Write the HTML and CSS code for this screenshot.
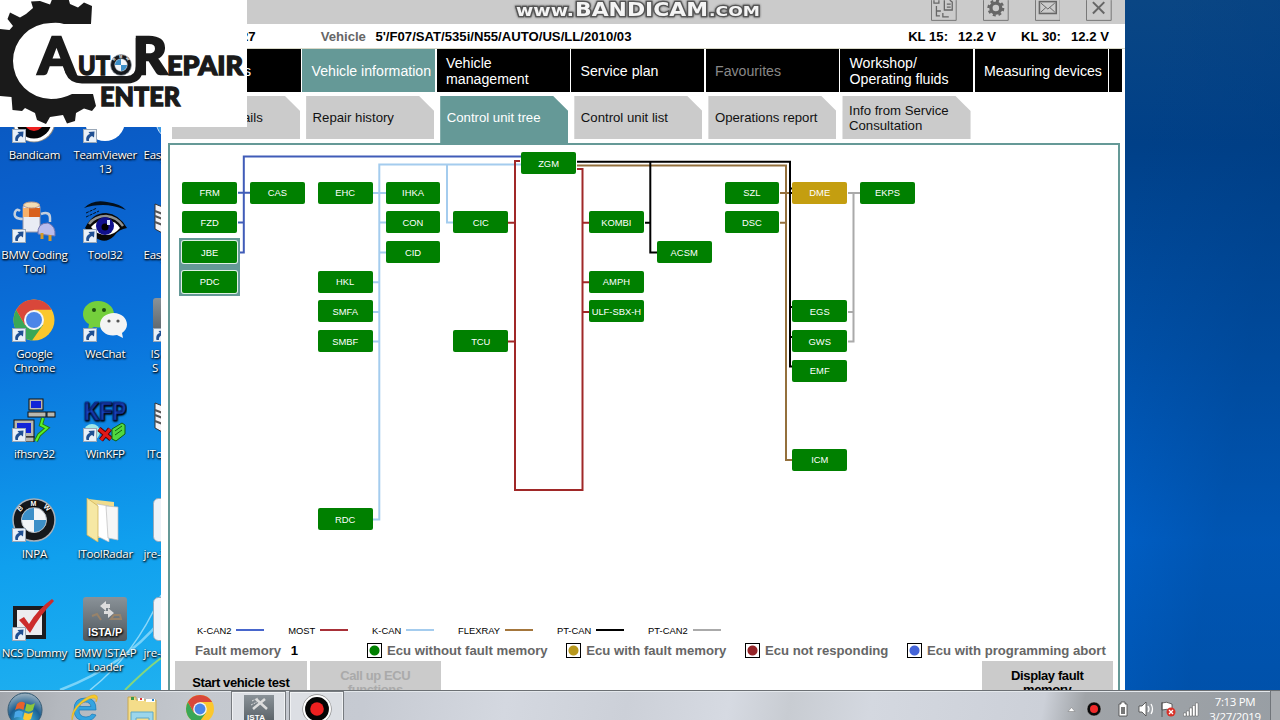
FILE: index.html
```
<!DOCTYPE html>
<html lang="en">
<head>
    <meta charset="UTF-8" />
    <title>Control unit tree</title>
    <link rel="stylesheet" href="styles.css">
</head>
<body>
    <svg class="defs" width="0" height="0">
        <defs>
            <linearGradient id="grayfade" x1="0" y1="0" x2="0" y2="1">
                <stop offset="0" stop-color="#8a9298" />
                <stop offset="1" stop-color="#50585e" />
            </linearGradient>
            <radialGradient id="orbfade" cx=".5" cy=".85" r=".8">
                <stop offset="0" stop-color="#48c8f0" />
                <stop offset=".6" stop-color="#1b5f92" />
                <stop offset="1" stop-color="#8fa9bb" />
            </radialGradient>
            <g id="shortcut" transform="translate(0 30)">
                <rect x=".5" y=".5" width="13" height="13" fill="#e8f0f8" stroke="#9aa8b8" />
                <path d="M3.500 12C2.500 8 4.500 5.500 7 5L5.500 3L11.500 2.500L11 8.500L9 7C7 8 5.500 9.500 6 12Z" fill="#1f4f92" />
            </g>
            <symbol id="chrome" viewBox="0 0 44 44">
                <circle cx="22" cy="22" r="20.500" fill="#fbc72d" />
                <path d="M22 22L31 27L20 42.400A20.500 20.500 0 0 1 4.200 11.800L13 27Z" fill="#3aa757" />
                <path d="M4.200 11.800A20.500 20.500 0 0 1 39.800 11.800H22L13 27Z" fill="#d9473a" />
                <circle cx="22" cy="22" r="10" fill="#f4f4f4" />
                <circle cx="22" cy="22" r="8" fill="#4a86e8" />
            </symbol>
            <symbol id="roundel" viewBox="0 0 44 44">
                <circle cx="22" cy="22" r="21" fill="#15181c" stroke="#a8b0b8" stroke-width="1.500" />
                <circle cx="22" cy="22" r="12.500" fill="#f2f5f8" stroke="#b8c0c8" />
                <path d="M22 22V10A12 12 0 0 0 10 22ZM22 22V34A12 12 0 0 0 34 22Z" fill="#3c8fc8" />
                <g class="roundel-text">
                    <text x="8" y="14" transform="rotate(-45 8 14)">B</text>
                    <text x="18.500" y="8">M</text>
                    <text x="31" y="9" transform="rotate(45 31 9)">W</text>
                </g>
            </symbol>
            <symbol id="record" viewBox="0 0 44 44">
                <circle cx="22" cy="22" r="21.500" fill="#888" />
                <circle cx="22" cy="22" r="20.500" fill="#fff" />
                <circle cx="22" cy="22" r="17.500" fill="#050505" />
                <circle cx="22" cy="22" r="10" fill="#ee2020" />
            </symbol>
            <symbol id="book" viewBox="0 0 44 44">
                <path d="M2 5L20 12V40L2 30Z" fill="#f2f2f6" stroke="#333" />
                <path d="M2 12L20 19M2 17L20 24M2 23L20 30" stroke="#555" stroke-width="2" />
            </symbol>
            <symbol id="page" viewBox="0 0 44 44">
                <rect x=".5" y=".5" width="43" height="43" rx="5" fill="#eef2f8" stroke="#9ab" />
            </symbol>
        </defs>
    </svg>

    <svg class="streaks" viewBox="0 0 161 100" width="161" height="100">
        <path d="M60 100Q125 75 161 30" stroke="#b8ecff" stroke-width="2.500" opacity=".6" />
        <path d="M90 100Q135 65 161 5" stroke="#d8f6ff" stroke-width="1.500" opacity=".6" />
        <path d="M125 100Q145 80 161 68" stroke="#9fe060" stroke-width="2" opacity=".8" />
    </svg>

    <div class="desktop">
        <div class="shortcut">
            <svg viewBox="0 0 44 44"><use href="#record" /><use href="#shortcut" /></svg>
            <span>Bandicam</span>
        </div>
        <div class="shortcut">
            <svg viewBox="0 0 44 44"><circle cx="22" cy="22" r="20" fill="#fff" /><use href="#shortcut" /></svg>
            <span>TeamViewer 13</span>
        </div>
        <div class="shortcut cut">
            <svg viewBox="0 0 44 44"><circle cx="22" cy="22" r="19" fill="#3c9be8" stroke="#cfe4fa" /></svg>
            <span>Easy</span>
        </div>

        <div class="shortcut">
            <svg viewBox="0 0 44 44">
                <path d="M11 20Q1 20 3 13Q5 9 8 12M29 15Q38 12 38 19V23" fill="none" stroke="#c6d0dc" stroke-width="2.500" />
                <rect x="11" y="5" width="17" height="28" rx="3" fill="#e9ecf4" stroke="#99a" />
                <path d="M11 9H28V18H11Z" fill="#d8611e" />
                <path d="M11 9H17V18H11Z" fill="#f6b06a" />
                <ellipse cx="19.500" cy="6" rx="8" ry="3" fill="#f2dcb4" stroke="#b98" />
                <path d="M26 35Q25 24 36 24Q44 27 43 37Z" fill="#b9bcec" stroke="#7478b0" />
                <path d="M30 34V40M38 36V42" stroke="#d59a28" stroke-width="3" />
                <use href="#shortcut" />
            </svg>
            <span>BMW Coding Tool</span>
        </div>
        <div class="shortcut">
            <svg viewBox="0 0 44 44">
                <path d="M1 9Q10 0 24 3Q38 5 43 11Q30 6 20 6Q9 6 1 9Z" fill="#04101c" />
                <path d="M3 14L14 9M3 18L16 12" stroke="#04101c" stroke-dasharray="3 1" />
                <path d="M2 29Q9 14 23 14Q36 15 44 29Q36 30 31 37Q22 46 12 38Q8 34 2 29Z" fill="#080808" />
                <path d="M6 25Q12 17 23 17Q34 18 40 27" fill="none" stroke="#8d9090" stroke-width="2.500" />
                <path d="M8 28Q14 21 23 21Q33 22 37 29Q31 36 24 36Q13 36 8 28Z" fill="#fff" />
                <circle cx="22" cy="27" r="9" fill="#10108c" />
                <circle cx="22" cy="28" r="3.500" fill="#000" />
                <path d="M24 21H27V26H24Z" fill="#d8e4ff" />
                <use href="#shortcut" />
            </svg>
            <span>Tool32</span>
        </div>
        <div class="shortcut cut">
            <svg viewBox="0 0 44 44"><use href="#book" /></svg>
            <span>Easy</span>
        </div>

        <div class="shortcut">
            <svg viewBox="0 0 44 44"><use href="#chrome" /><use href="#shortcut" /></svg>
            <span>Google Chrome</span>
        </div>
        <div class="shortcut">
            <svg viewBox="0 0 44 44">
                <path d="M15 3C6 3 0 9 0 16C0 20 2 24 6 26L5 32L11 29C22 31 31 25 31 16C31 9 24 3 15 3Z" fill="#74cf3c" />
                <circle cx="11" cy="12" r="2" fill="#1d4d12" /><circle cx="21" cy="12" r="2" fill="#1d4d12" />
                <path d="M31 15C23 15 17 20 17 26.500C17 34 25 39 34 37L40 40L39 35C42 33 44 30 44 26.500C44 20 38 15 31 15Z" fill="#f4f4f4" />
                <circle cx="26" cy="23" r="1.600" fill="#555" /><circle cx="35" cy="23" r="1.600" fill="#555" />
                <use href="#shortcut" />
            </svg>
            <span>WeChat</span>
        </div>
        <div class="shortcut cut">
            <svg viewBox="0 0 44 44"><rect width="44" height="44" rx="3" fill="url(#grayfade)" /><use href="#shortcut" /></svg>
            <span class="center">IS<br>S</span>
        </div>

        <div class="shortcut">
            <svg viewBox="0 0 44 44">
                <g stroke="#111" fill="#b8b8b0">
                    <rect x="17" y="1" width="14" height="11" /><rect x="16" y="14" width="18" height="5" />
                    <rect x="35" y="14" width="8" height="5" />
                    <rect x="2" y="22" width="20" height="17" /><rect x="8" y="39" width="14" height="5" />
                </g>
                <rect x="19" y="3" width="10" height="7" fill="#1024d8" />
                <rect x="5" y="25" width="14" height="10" fill="#1024d8" />
                <path d="M31 20L29 27L35 30L27 37L24 43" fill="none" stroke="#2a7a10" stroke-width="4" />
                <path d="M31 20L29 27L35 30L27 37L24 43" fill="none" stroke="#58f428" stroke-width="2" />
                <use href="#shortcut" />
            </svg>
            <span>ifhsrv32</span>
        </div>
        <div class="shortcut">
            <svg viewBox="0 0 44 44">
                <circle cx="9" cy="34" r="8" fill="#9ee8e8" />
                <path d="M16 31L28 41M27 31L18 42" stroke="#500" stroke-width="5" />
                <path d="M16 31L28 41M27 31L18 42" stroke="#e01818" stroke-width="3" />
                <path d="M29 31L39 25L42 27V36L33 43L29 41Z" fill="#50d840" stroke="#126010" />
                <path d="M32 33L39 28M32 37L39 32" stroke="#126010" />
                <text class="kfp" x="1" y="22" textLength="42" lengthAdjust="spacingAndGlyphs">KFP</text>
                <use href="#shortcut" />
            </svg>
            <span>WinKFP</span>
        </div>
        <div class="shortcut cut">
            <svg viewBox="0 0 44 44"><use href="#book" /></svg>
            <span class="inset">ITool</span>
        </div>

        <div class="shortcut">
            <svg viewBox="0 0 44 44"><use href="#roundel" /><use href="#shortcut" /></svg>
            <span>INPA</span>
        </div>
        <div class="shortcut">
            <svg viewBox="0 0 44 44">
                <path d="M5 1L31 4V40H12Z" fill="#f0dc8c" />
                <path d="M14 6L26 8V44L14 38Z" fill="#fff" stroke="#bbb" stroke-width=".7" />
                <path d="M23 8L35 9V42L25 40Z" fill="#f6f6f6" stroke="#bbb" stroke-width=".7" />
                <path d="M4 0L15 8V44L4 37Z" fill="#f6e8a4" stroke="#d0b45c" stroke-width=".8" />
            </svg>
            <span>IToolRadar</span>
        </div>
        <div class="shortcut cut">
            <svg viewBox="0 0 44 44"><use href="#page" /></svg>
            <span>jre-7</span>
        </div>

        <div class="shortcut">
            <svg viewBox="0 0 44 44">
                <rect x="1" y="9" width="33" height="33" fill="#1c1c20" />
                <rect x="5" y="13" width="25" height="25" fill="#ececf0" />
                <path d="M7 23L12 20L17 27Q26 12 40 2L42 4Q28 18 18 36Q12 28 7 23Z" fill="#cc2c2c" />
                <use href="#shortcut" />
            </svg>
            <span>NCS Dummy</span>
        </div>
        <div class="shortcut">
            <svg viewBox="0 0 44 44">
                <rect width="44" height="44" rx="3" fill="url(#grayfade)" />
                <path d="M17 9L23 4V7H27V11H23V14ZM31 16L25 11V14H21V17H25V21Z" fill="#ddd" />
                <path d="M9 19L14 17L18 23M28 22L31 18H37L38 22Z" fill="none" stroke="#98836a" stroke-width="2" />
                <text class="istap" x="5" y="39" textLength="34">ISTA/P</text>
            </svg>
            <span>BMW ISTA-P Loader</span>
        </div>
        <div class="shortcut cut">
            <svg viewBox="0 0 44 44"><use href="#page" /></svg>
            <span>jre-8</span>
        </div>
    </div>

    <div class="app">
        <div class="titlebar">
            <svg class="tool" viewBox="0 0 26 22">
                <path class="frame" d="M.5 0V20.500H25.500V0" />
                <g fill="none" stroke="#666" stroke-width="1.300">
                    <path d="M13.500 0V10H21.500V2L19 0M16 4H20M16 7H20M3 0V3H8V0M5.500 6V16H9M6 11H10M12 13V17H18" />
                </g>
            </svg>
            <svg class="tool" viewBox="0 0 26 22">
                <path class="frame" d="M.5 0V20.500H25.500V0" />
                <circle cx="13" cy="8" r="5" fill="none" stroke="#666" stroke-width="3.400" />
                <circle cx="13" cy="8" r="7.400" fill="none" stroke="#666" stroke-width="2.400" stroke-dasharray="3 2.810" />
            </svg>
            <svg class="tool" viewBox="0 0 26 22">
                <path class="frame" d="M.5 0V20.500H25.500V0" />
                <g fill="none" stroke="#666">
                    <rect x="4.500" y="1.500" width="17" height="12" stroke-width="1.600" />
                    <path d="M6 3L13 9L20 3M6 12L11 7.500M20 12L15 7.500" />
                </g>
            </svg>
            <svg class="tool" viewBox="0 0 26 22">
                <path class="frame" d="M.5 0V20.500H25.500V0" />
                <path d="M7 2L18.500 13.500M18.500 2L7 13.500" stroke="#666" stroke-width="2" />
            </svg>
        </div>

        <div class="info">
            <span class="vin">27</span>
            <span class="key">Vehicle</span>
            <span class="car">5'/F07/SAT/535i/N55/AUTO/US/LL/2010/03</span>
            <span class="volt">KL 15:</span><span>12.2 V</span>
            <span class="volt second">KL 30:</span><span>12.2 V</span>
        </div>

        <nav class="main">
            <a class="first">Operations</a>
            <a class="active">Vehicle information</a>
            <a>Vehicle<br>management</a>
            <a>Service plan</a>
            <a class="disabled">Favourites</a>
            <a>Workshop/<br>Operating fluids</a>
            <a>Measuring devices</a>
            <a class="rest"></a>
        </nav>

        <nav class="sub">
            <a>Vehicle details</a>
            <a>Repair history</a>
            <a class="active">Control unit tree</a>
            <a>Control unit list</a>
            <a>Operations report</a>
            <a>Info from Service Consultation</a>
        </nav>

        <div class="panel">
            <div class="tree">
                <svg class="wires" viewBox="170 145 948 460">
                    <path class="kcan2" d="M521 156.500H243.800V252.500H240M238 192.800H250M238 222.600H243.800" />
                    <path class="kcan" d="M521 164.500H379.300V519.500H373M447 164.500V222.600H453M373 193H386M379 222.600H386M379 252.500H386M373 282.200H379M373 312H379M373 341.500H379" />
                    <path class="most" d="M520 161H515V490H582.500V169H577M508 222.700H515M508 341.500H515M582.500 222.700H589M582.500 282.200H589M582.500 312H589" />
                    <path class="flexray" d="M577 165.500H786V460H792M780 193H792M780 222.700H786" />
                    <path class="ptcan" d="M577 161.700H790V366.500H793M790 188.500H793M789 193H793M790 307H793M790 337H793M650.300 161.700V252.500H657M645 222.700H650" />
                    <path class="ptcan2" d="M848 193H860M853.500 193V341.500H848M848 312H853.500" />
                </svg>
                <div class="group"></div>
                <div class="ecu c6 r1">ZGM</div>
                <div class="ecu c1 r2">FRM</div>
                <div class="ecu c2 r2">CAS</div>
                <div class="ecu c3 r2">EHC</div>
                <div class="ecu c4 r2">IHKA</div>
                <div class="ecu c9 r2">SZL</div>
                <div class="ecu c10 r2 fault">DME</div>
                <div class="ecu c11 r2">EKPS</div>
                <div class="ecu c1 r3">FZD</div>
                <div class="ecu c4 r3">CON</div>
                <div class="ecu c5 r3">CIC</div>
                <div class="ecu c7 r3">KOMBI</div>
                <div class="ecu c9 r3">DSC</div>
                <div class="ecu c1 r4 grouped">JBE</div>
                <div class="ecu c4 r4">CID</div>
                <div class="ecu c8 r4">ACSM</div>
                <div class="ecu c1 r5 grouped">PDC</div>
                <div class="ecu c3 r5">HKL</div>
                <div class="ecu c7 r5">AMPH</div>
                <div class="ecu c3 r6">SMFA</div>
                <div class="ecu c7 r6">ULF-SBX-H</div>
                <div class="ecu c10 r6">EGS</div>
                <div class="ecu c3 r7">SMBF</div>
                <div class="ecu c5 r7">TCU</div>
                <div class="ecu c10 r7">GWS</div>
                <div class="ecu c10 r8">EMF</div>
                <div class="ecu c10 r11">ICM</div>
                <div class="ecu c3 r13">RDC</div>
            </div>

            <div class="buses">
                <span>K-CAN2<i class="line blue"></i></span>
                <span>MOST<i class="line red"></i></span>
                <span>K-CAN<i class="line light"></i></span>
                <span>FLEXRAY<i class="line brown"></i></span>
                <span>PT-CAN<i class="line black"></i></span>
                <span>PT-CAN2<i class="line gray"></i></span>
            </div>

            <div class="status">
                <div class="count">Fault memory <b>1</b></div>
                <span><i class="dot green"></i>Ecu without fault memory</span>
                <span><i class="dot gold"></i>Ecu with fault memory</span>
                <span><i class="dot red"></i>Ecu not responding</span>
                <span><i class="dot blue"></i>Ecu with programming abort</span>
            </div>

            <div class="actions">
                <button>Start vehicle test</button>
                <button disabled>Call up ECU functions</button>
                <button class="last">Display fault memory</button>
            </div>
        </div>
    </div>

    <svg class="watermark" viewBox="0 0 256 24" width="256" height="24">
        <text x="6" y="16" textLength="58" lengthAdjust="spacingAndGlyphs">www.</text>
        <text class="big" x="65" y="16" textLength="133" lengthAdjust="spacingAndGlyphs">BANDICAM</text>
        <text class="com" x="199" y="16" textLength="51" lengthAdjust="spacingAndGlyphs">.COM</text>
    </svg>

    <svg class="logo" viewBox="0 0 247 127" width="247" height="127">
        <path fill="#1a1a1a" d="M91 24L92 6L84 2.500L78 7.500L70 4L68 -3H53L50 4.500L40 1L31 1.500L33 8L26 14L20 17.500L10 12.500L7.500 19L13 26L9.500 30L0 29V96L11.500 97L12.500 110L22 111L25 108L35 113L37 120L46 124L50 117L63 115L67 123.500L75 121L76 113L84 108.500L92 111L96 106L93 94H72Q62 99 51 99A38 38 0 0 1 51 23Q58 22 64 24Z" />
        <path fill="none" stroke="#1a1a1a" stroke-width="7.500" d="M64 58L69 72Q72 79.700 82 79.700H127Q139.500 79.700 139.500 66V38" />
        <g class="logo-text">
            <text class="cap" x="38" y="74" textLength="37" lengthAdjust="spacingAndGlyphs">A</text>
            <text class="cap" x="133" y="74" textLength="34" lengthAdjust="spacingAndGlyphs">R</text>
            <text x="78" y="74.500" textLength="32" lengthAdjust="spacingAndGlyphs">UT</text>
            <text x="167" y="74.500" textLength="76" lengthAdjust="spacingAndGlyphs">EPAIR</text>
            <text x="100" y="106" textLength="80" lengthAdjust="spacingAndGlyphs">ENTER</text>
        </g>
        <use href="#roundel" x="110" y="54" width="22" height="22" />
    </svg>

    <div class="taskbar">
        <svg class="orb" viewBox="0 0 36 36">
            <circle cx="18" cy="18" r="17" fill="url(#orbfade)" stroke="#345a74" />
            <path d="M10 12Q14 8 18 11L16.500 18Q12 15 8 18Z" fill="#e8622c" />
            <path d="M19.500 11.500Q24 14 28 11L26 18Q22 21 18 18.500Z" fill="#8cc63c" />
            <path d="M8 20Q12 17 16 20L14.500 26Q11 24 7 26Z" fill="#4aa8e8" />
            <path d="M17.500 20.500Q22 23 26 20L24 27Q20 30 16 27Z" fill="#fcc830" />
        </svg>
        <svg class="ie" viewBox="0 0 30 32">
            <path d="M26 18H9Q9 25 16 25Q20 25 22 22L26 23Q23 29 15.500 29Q4 29 4 17.500Q4 6 15.500 6Q26.500 6 26 18ZM9.500 14.500H21Q20 10 15.500 10Q11 10 9.500 14.500Z" fill="#35a4e0" stroke="#1878b8" stroke-width=".7" />
            <path d="M2 29Q0 19 11 9.500Q23 0 27 4Q28.500 6 26 10Q27 4 19 7Q5 14 3 25Z" fill="#f6c92c" stroke="#d0a018" stroke-width=".4" />
        </svg>
        <svg class="folder" viewBox="0 0 30 32">
            <path d="M1 4H9V7H29V32H1Z" fill="#f4dd8a" stroke="#c8a850" />
            <path d="M4 4H7V7H4Z" fill="#3a9a4a" /><path d="M11 5H17V8H11ZM19 6H28V9H19Z" fill="#fff" />
            <path d="M13 5H15V7H13Z" fill="#d33" /><path d="M25 6H27V8H25Z" fill="#38c" />
            <path d="M4 32V19H26V32H22V25H9V32Z" fill="#9bd6ec" stroke="#5fa8c8" />
        </svg>
        <svg class="chrome" viewBox="0 0 44 44"><use href="#chrome" /></svg>
        <div class="task">
            <svg viewBox="0 0 30 32">
                <rect width="30" height="32" fill="url(#grayfade)" />
                <path d="M9 14L21 4M12 4L23 14" stroke="#ddd" stroke-width="2.500" />
                <path d="M8 6L14 3M7 10L13 7" stroke="#ddd" stroke-dasharray="2 1" />
                <text class="ista" x="3" y="25" textLength="18">ISTA</text>
            </svg>
        </div>
        <div class="task">
            <svg class="rec" viewBox="0 0 44 44"><use href="#record" /></svg>
        </div>

        <div class="tray">
            <svg viewBox="0 0 136 30" width="136" height="30">
                <path d="M4 21.500H11L7.500 17.500Z" fill="#fff" stroke="#777" stroke-width=".5" />
                <circle cx="30" cy="19" r="7" fill="#0a0a0a" stroke="#bbb" stroke-width=".5" />
                <circle cx="30" cy="19" r="4" fill="#f02a2a" />
                <g fill="#fff" stroke="#444" stroke-width=".8">
                    <path d="M57 12H61V14H63V26H55V14H57Z" />
                    <path d="M57 17H61V24H57Z" fill="#777" stroke="none" />
                    <path d="M75 16H78L82 12V26L78 22H75Z" />
                    <path d="M98 12V27M98 13Q102 11 108 14V21Q103 18 98 20Z" />
                    <path d="M119.500 23H122V26H119.500ZM122.500 21H125V26H122.500ZM125.500 18H128V26H125.500ZM128.500 15.500H131V26H128.500ZM131.500 13H134V26H131.500Z" stroke-width=".4" />
                </g>
                <path d="M84 16Q86 19 84 22M87 14Q90 19 87 24" fill="none" stroke="#fff" stroke-width="1.300" />
                <circle cx="107" cy="22" r="4.500" fill="#d83028" />
                <path d="M105 20L109 24M109 20L105 24" stroke="#fff" stroke-width="1.300" />
            </svg>
            <div class="clock">7:13 PM<br>3/27/2019</div>
            <div class="peek"></div>
        </div>
    </div>
</body>
</html>
```
FILE: styles.css
```
* {
    box-sizing: border-box;
}

body {
    margin: 0;
    width: 1280px;
    height: 720px;
    overflow: hidden;
    position: relative;
    font-family: "Liberation Sans", Arial, sans-serif;
    background:
        linear-gradient(100deg, #0060cc00 1150px, #003c8055 1290px),
        linear-gradient(#0a4684, #004088 20%, #0050a8 48%, #0062cc 75%, #005cc0 96%) 700px 0 / 580px 100% no-repeat,
        linear-gradient(170deg, #0a50b4, #0a60cc 22%, #0a74dc 38%, #10a0ee 60%, #22b4f0 80%, #189ee4);
}

.defs {
    position: absolute;
}

.streaks {
    position: absolute;
    left: 0;
    top: 590px;
    fill: none;
}

/* desktop icons */
.desktop {
    position: absolute;
    left: -1px;
    top: 99px;
    width: 162px;
    height: 591px;
    overflow: hidden;
    display: grid;
    grid-template-columns: repeat(3, 70.8px);
    grid-auto-rows: 99.7px;
}

.shortcut {
    display: flex;
    flex-direction: column;
    align-items: center;
    gap: 5px;
    font-family: "Open Sans", "Noto Sans", sans-serif;
    font-size: 11.5px;
    line-height: 14px;
    letter-spacing: -0.25px;
    text-align: center;
    color: #fff;
    text-shadow: 0 1px 2px #000, 1px 1px 2px #000;
}

    .shortcut svg {
        width: 44px;
        height: 44px;
    }

    .shortcut.cut {
        align-items: flex-start;
        text-align: left;
        padding-left: 3px;
    }

        .shortcut.cut svg {
            margin-left: 9px;
        }

        .shortcut.cut .inset {
            margin-left: 3px;
        }

        .shortcut.cut .center {
            margin-left: 7px;
            text-align: center;
        }

.roundel-text {
    font: bold 7px "Liberation Sans", sans-serif;
    fill: #fff;
}

.kfp {
    font: bold 25px "Liberation Sans", sans-serif;
    fill: #1c50e8;
    stroke: #0a2080;
    stroke-width: 0.6px;
}

.istap {
    font: bold 11px "Liberation Sans", sans-serif;
    fill: #fff;
}

.ista {
    font: bold 8px "Liberation Sans", sans-serif;
    fill: #fff;
}

/* diagnosis window */
.app {
    position: absolute;
    left: 161px;
    top: 0;
    width: 964px;
    height: 690px;
    overflow: hidden;
    background: #fff;
}

.titlebar {
    height: 24px;
    padding-right: 13px;
    display: flex;
    justify-content: flex-end;
    gap: 26px;
    background: #cbcbcb;
}

.tool {
    width: 25.7px;
    height: 22px;
}

    .tool .frame {
        fill: none;
        stroke: #777;
    }

.info {
    height: 25px;
    display: flex;
    align-items: center;
    border-bottom: 1px solid #d8d8c8;
    font-size: 13.15px;
    font-weight: bold;
    padding: 0 16px 0 80px;
}

    .info .key {
        margin-left: 65px;
        color: #666;
    }

    .info .car {
        margin-left: 9.5px;
    }

    .info .volt {
        margin-left: auto;
        margin-right: 10px;
    }

    .info .second {
        margin-left: 25px;
    }

.main {
    display: flex;
    gap: 1.7px;
    height: 43px;
    padding-left: 6.8px;
}

    .main a {
        flex: none;
        width: 132.8px;
        padding-left: 9.3px;
        display: flex;
        align-items: center;
        background: #000;
        color: #fff;
        font-size: 14.15px;
        line-height: 16px;
        white-space: nowrap;
    }

    .main .first {
        padding-left: 14px;
    }

    .main .active {
        background: #659997;
    }

    .main .disabled {
        color: #888;
    }

    .main .rest {
        width: 13px;
    }

.sub {
    display: flex;
    align-items: flex-start;
    gap: 6px;
    height: 51px;
    padding: 4px 0 0 11px;
}

    .sub a {
        width: 128.1px;
        height: 43px;
        padding: 0 6px 0 6.5px;
        display: flex;
        align-items: center;
        background: #cbcbcb;
        clip-path: polygon(0 0, 113px 0, 100% 15px, 100% 100%, 0 100%);
        color: #111;
        font-size: 13.2px;
        line-height: 15px;
    }

    .sub .active {
        height: 47px;
        padding-bottom: 4px;
        background: #659997;
        color: #fff;
    }

.panel {
    margin: 0 5px 0 7px;
    height: 560px;
    border: 2px solid #659997;
}

/* control unit tree */
.tree {
    position: relative;
    height: 478px;
    padding: 7px 0 0 12.2px;
    display: grid;
    grid-template-columns: repeat(11, 54.8px);
    grid-template-rows: repeat(13, 22px);
    column-gap: 13px;
    row-gap: 7.7px;
}

.wires {
    position: absolute;
    left: 0;
    top: 0;
    width: 948px;
    height: 460px;
    fill: none;
    stroke-width: 2;
}

.kcan2 { stroke: #405cb8; }
.kcan { stroke: #a4ccee; }
.most { stroke: #a02828; }
.flexray { stroke: #94703c; }
.ptcan { stroke: #000; }
.ptcan2 { stroke: #aaa; }

.ecu {
    position: relative;
    display: flex;
    align-items: center;
    justify-content: center;
    border-radius: 2px;
    background: #008000;
    color: #fff;
    font-size: 9.4px;
    white-space: nowrap;
}

    .ecu.fault {
        background: #c49e10;
    }

    .ecu.grouped {
        box-shadow: 0 0 0 1px #dff0e4;
    }

.group {
    position: relative;
    grid-column: 1;
    grid-row: 4 / 6;
    margin: -3.5px;
    background: #659997;
}

.c1 { grid-column: 1; }
.c2 { grid-column: 2; }
.c3 { grid-column: 3; }
.c4 { grid-column: 4; }
.c5 { grid-column: 5; }
.c6 { grid-column: 6; }
.c7 { grid-column: 7; }
.c8 { grid-column: 8; }
.c9 { grid-column: 9; }
.c10 { grid-column: 10; }
.c11 { grid-column: 11; }

.r1 { grid-row: 1; }
.r2 { grid-row: 2; }
.r3 { grid-row: 3; }
.r4 { grid-row: 4; }
.r5 { grid-row: 5; }
.r6 { grid-row: 6; }
.r7 { grid-row: 7; }
.r8 { grid-row: 8; }
.r11 { grid-row: 11; }
.r13 { grid-row: 13; }

/* legend */
.buses {
    display: flex;
    gap: 23.8px;
    height: 14px;
    padding-left: 27px;
    font-size: 9.4px;
}

    .buses span {
        display: flex;
        align-items: center;
        gap: 5px;
    }

.line {
    width: 28px;
    height: 2px;
}

    .line.blue { background: #4866cc; }
    .line.red { background: #a83038; }
    .line.light { background: #a4ccee; }
    .line.brown { background: #a4763c; }
    .line.black { background: #000; }
    .line.gray { background: #aaa; }

.status {
    display: flex;
    align-items: center;
    gap: 18.6px;
    height: 24px;
    margin-top: 1px;
    padding-left: 25px;
    color: #666;
    font-size: 13.15px;
    font-weight: bold;
    white-space: nowrap;
}

    .status .count {
        width: 153.4px;
    }

    .status b {
        margin-left: 6px;
        color: #000;
    }

    .status span {
        display: flex;
        align-items: center;
        gap: 5px;
    }

.dot {
    width: 15px;
    height: 15px;
    border: 1px solid #000;
}

    .dot.green { background: radial-gradient(circle, #008000 4.5px, #fff 5.5px); }
    .dot.gold { background: radial-gradient(circle, #b8981c 4.5px, #fff 5.5px); }
    .dot.red { background: radial-gradient(circle, #942428 4.5px, #fff 5.5px); }
    .dot.blue { background: radial-gradient(circle, #4464d8 4.5px, #fff 5.5px); }

.actions {
    display: flex;
    gap: 3px;
    margin-top: -1px;
    padding: 0 5px;
}

    .actions button {
        width: 131.5px;
        height: 43px;
        padding: 0 20px;
        border: 0;
        background: #cbcbcb;
        color: #000;
        font: bold 13px/13.5px "Liberation Sans", Arial, sans-serif;
        letter-spacing: -0.38px;
    }

    .actions button:first-child {
        padding: 0;
    }

    .actions button:disabled {
        color: #aaa;
    }

    .actions .last {
        margin-left: auto;
    }

.watermark {
    position: absolute;
    left: 510px;
    top: 0;
    font: bold 16px "DejaVu Sans", sans-serif;
    fill: #f4f4f4;
    stroke: #555;
    stroke-width: 2.5px;
    paint-order: stroke;
    filter: drop-shadow(0 0 1px #555);
}

    .watermark .big {
        font-size: 20px;
    }

    .watermark .com {
        font-size: 14px;
    }

.logo {
    position: absolute;
    left: 0;
    top: 0;
    background: #fff;
}

.logo-text {
    font: 900 26px Lato, sans-serif;
    fill: #1a1a1a;
    stroke: #1a1a1a;
    stroke-width: 1.3px;
}

    .logo-text .cap {
        font-size: 52px;
        stroke-width: 2.4px;
    }

/* taskbar */
.taskbar {
    position: absolute;
    left: 0;
    top: 690px;
    width: 1280px;
    height: 30px;
    overflow: hidden;
    display: flex;
    align-items: flex-start;
    border-top: 1px solid #6c7074;
    box-shadow: inset 0 1px 0 #e4e8ec;
    background: linear-gradient(100deg, #a2a6ac, #b4b8be 60px, #c4c8ce 200px, #c6cad2 360px, #d4d8e0 500px, #ccd0d8 620px, #d6dae2 720px, #c8ccd2 780px, #d4d8e0 860px, #ccd0d8 1030px, #a0a4a8 1070px, #989ea4);
}

    .taskbar .orb {
        width: 36px;
        height: 36px;
        margin: 1px 0 0 7px;
    }

    .taskbar .ie {
        width: 30px;
        height: 32px;
        margin: 1px 0 0 27px;
    }

    .taskbar .folder {
        width: 30px;
        height: 32px;
        margin: 2px 0 0 27px;
    }

    .taskbar .chrome {
        width: 30px;
        height: 30px;
        margin: 3px 16px 0 28px;
    }

.task {
    width: 55px;
    height: 34px;
    margin-right: 3px;
    padding-top: 3px;
    display: flex;
    justify-content: center;
    border: 1px solid #777b80;
    box-shadow: inset 0 0 0 1px #f0f2f4;
    background: #dcdfe4;
}

    .task svg {
        width: 30px;
        height: 32px;
    }

    .task .rec {
        margin-top: -2px;
    }

.tray {
    margin-left: auto;
    display: flex;
}

    .tray svg {
        margin-top: -1px;
    }

.clock {
    width: 70px;
    padding-top: 3px;
    font: 11.5px/15px "Open Sans", "Noto Sans", sans-serif;
    letter-spacing: -0.35px;
    text-align: center;
    white-space: nowrap;
    color: #fff;
}

.peek {
    width: 10px;
    height: 30px;
    border-left: 1px solid #70757a;
    background: #a8acb0;
}
```
